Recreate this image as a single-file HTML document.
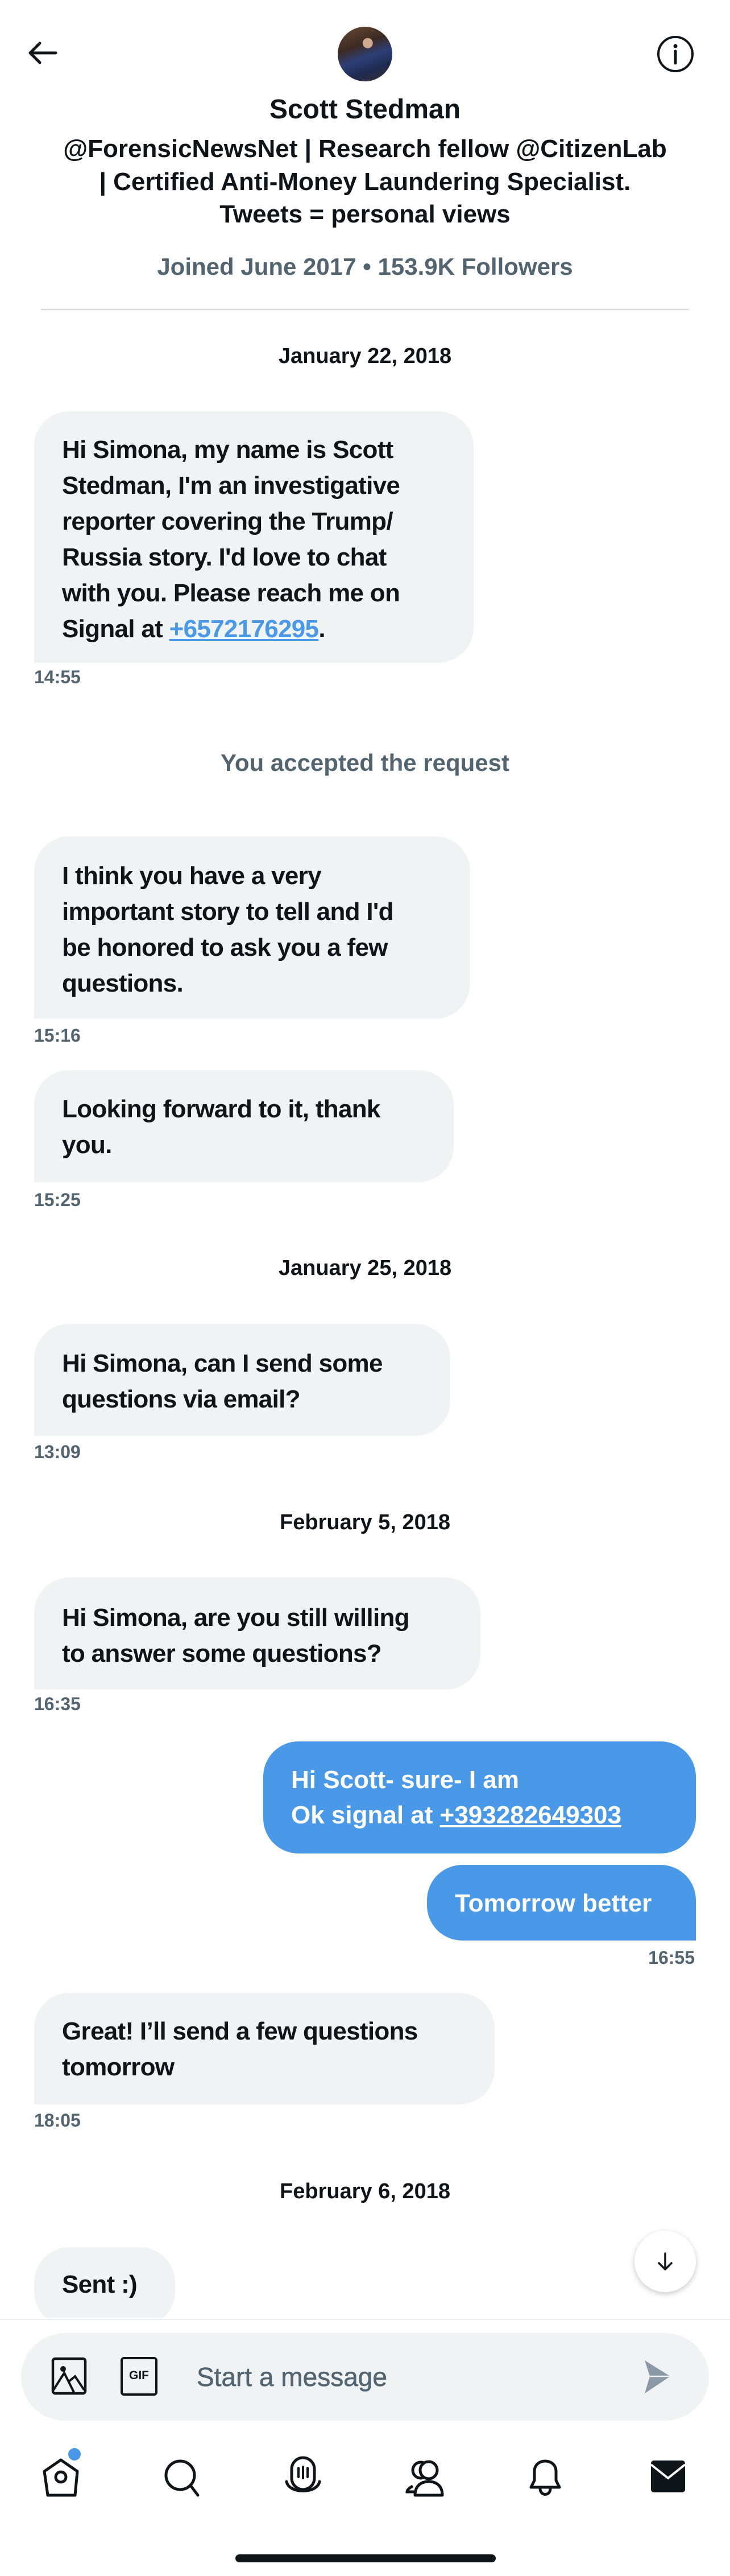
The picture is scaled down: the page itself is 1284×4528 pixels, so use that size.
<!DOCTYPE html>
<html><head><meta charset="utf-8">
<style>
*{margin:0;padding:0;box-sizing:border-box}
html,body{width:1284px;height:4528px;background:#fff;overflow:hidden}
body{position:relative;font-family:"Liberation Sans",sans-serif;color:#0f1419;font-weight:bold}
.a{position:absolute}
.c{position:absolute;left:0;width:1284px;text-align:center;white-space:nowrap}
.b{position:absolute;background:#eff3f4;border-radius:62px 62px 62px 0;padding-left:49px;font-size:44px;line-height:63px;letter-spacing:-0.7px;white-space:nowrap}
.u{position:absolute;background:#4a99e9;color:#fff;border-radius:62px;padding-left:49px;font-size:44px;line-height:62px;white-space:nowrap}
.t{position:absolute;font-size:32px;color:#536471;line-height:34px}
.d{font-size:38px;line-height:44px}
a{color:#4a99e9;text-decoration:underline}
.u a{color:#fff}
</style></head><body>

<svg class="a" style="left:44px;top:66px" width="62" height="56" viewBox="0 0 62 56"><path d="M54 27H10M26 10L9 27L26 44" fill="none" stroke="#0f1419" stroke-width="5" stroke-linecap="round" stroke-linejoin="round"/></svg>

<div class="a" style="left:594px;top:47px;width:96px;height:96px;border-radius:50%;background:radial-gradient(circle at 55% 30%,#d1a890 0 10%,transparent 11%),linear-gradient(160deg,#6a4a35 0%,#3c2a22 35%,#2d3f78 55%,#1e2a50 75%,#3a3030 100%);"></div>

<svg class="a" style="left:1154px;top:61px" width="68" height="68" viewBox="0 0 68 68"><circle cx="34" cy="34" r="30" fill="none" stroke="#0f1419" stroke-width="4"/><circle cx="34" cy="20" r="3.5" fill="#0f1419"/><path d="M34 29V50" stroke="#0f1419" stroke-width="5" stroke-linecap="round"/></svg>

<div class="c" style="top:165px;font-size:48px;line-height:56px">Scott Stedman</div>
<div class="c" style="top:233px;font-size:44px;line-height:57.5px">@ForensicNewsNet | Research fellow @CitizenLab<br>| Certified Anti-Money Laundering Specialist.<br>Tweets = personal views</div>
<div class="c" style="top:443px;font-size:42px;line-height:52px;color:#536471">Joined June 2017 • 153.9K Followers</div>
<div class="a" style="left:72px;top:543px;width:1140px;height:2px;background:#cfd9de"></div>

<div class="c d" style="top:604px">January 22, 2018</div>
<div class="b" style="left:60px;top:723px;width:773px;height:442px;padding-top:36px">Hi Simona, my name is Scott<br>Stedman, I'm an investigative<br>reporter covering the Trump/<br>Russia story. I'd love to chat<br>with you. Please reach me on<br>Signal at <a>+6572176295</a>.</div>
<div class="t" style="left:60px;top:1173px">14:55</div>

<div class="c" style="top:1315px;font-size:42px;line-height:52px;color:#536471">You accepted the request</div>

<div class="b" style="left:60px;top:1470px;width:767px;height:321px;padding-top:38px">I think you have a very<br>important story to tell and I'd<br>be honored to ask you a few<br>questions.</div>
<div class="t" style="left:60px;top:1803px">15:16</div>

<div class="b" style="left:60px;top:1881px;width:738px;height:197px;padding-top:37px">Looking forward to it, thank<br>you.</div>
<div class="t" style="left:60px;top:2092px">15:25</div>

<div class="c d" style="top:2207px">January 25, 2018</div>
<div class="b" style="left:60px;top:2327px;width:732px;height:197px;padding-top:38px">Hi Simona, can I send some<br>questions via email?</div>
<div class="t" style="left:60px;top:2535px">13:09</div>

<div class="c d" style="top:2654px">February 5, 2018</div>
<div class="b" style="left:60px;top:2773px;width:785px;height:197px;padding-top:39px">Hi Simona, are you still willing<br>to answer some questions?</div>
<div class="t" style="left:60px;top:2978px">16:35</div>

<div class="u" style="left:463px;top:3061px;width:761px;height:197px;padding-top:37px">Hi Scott- sure- I am<br>Ok signal at <a>+393282649303</a></div>
<div class="u" style="left:751px;top:3278px;width:473px;height:133px;padding-top:37px;border-radius:62px 62px 0 62px">Tomorrow better</div>
<div class="t" style="right:62px;top:3424px">16:55</div>

<div class="b" style="left:60px;top:3503px;width:810px;height:196px;padding-top:36px">Great! I’ll send a few questions<br>tomorrow</div>
<div class="t" style="left:60px;top:3710px">18:05</div>

<div class="c d" style="top:3830px">February 6, 2018</div>
<div class="b" style="left:60px;top:3950px;width:248px;height:140px;padding-top:34px;border-radius:62px">Sent :)</div>

<div class="a" style="left:1116px;top:3921px;width:108px;height:108px;border-radius:50%;background:#fff;box-shadow:0 3px 10px rgba(0,0,0,0.22)"></div>
<svg class="a" style="left:1150px;top:3955px" width="40" height="40" viewBox="0 0 40 40"><path d="M20 6V33M9 23L20 34L31 23" fill="none" stroke="#0f1419" stroke-width="3.5" stroke-linecap="round" stroke-linejoin="round"/></svg>

<div class="a" style="left:0;top:4076px;width:1284px;height:452px;background:#fff;border-top:1px solid #cfd9de"></div>
<div class="a" style="left:37px;top:4101px;width:1210px;height:154px;border-radius:77px;background:#eff3f4"></div>
<svg class="a" style="left:90px;top:4143px" width="64" height="68" viewBox="0 0 64 68"><rect x="3" y="3" width="57" height="61" rx="4" fill="none" stroke="#0f1419" stroke-width="4.5"/><circle cx="21" cy="21" r="5" fill="#0f1419"/><path d="M4 58L23 28L40 62M30 44L42 34L58 58" fill="none" stroke="#0f1419" stroke-width="4"/></svg>
<div class="a" style="left:212px;top:4143px;width:65px;height:68px;border:4.5px solid #0f1419;border-radius:6px;font-size:21px;line-height:58px;text-align:center;font-weight:bold">GIF</div>
<div class="a" style="left:346px;top:4150px;font-size:46px;line-height:56px;color:#536471;font-weight:normal;-webkit-text-stroke:0.6px #536471">Start a message</div>
<svg class="a" style="left:1131px;top:4147px" width="50" height="62" viewBox="0 0 50 62"><path d="M3 2L48 30L3 60L12 30Z" fill="#8b98a5"/><path d="M12 30H48" stroke="#eff3f4" stroke-width="2.5"/></svg>

<svg class="a" style="left:72px;top:4318px" width="70" height="72" viewBox="0 0 70 72"><path d="M6 26L35 6L64 26L60 68H12Z" fill="none" stroke="#0f1419" stroke-width="5" stroke-linejoin="round"/><circle cx="35" cy="36" r="9" fill="none" stroke="#0f1419" stroke-width="5"/></svg>
<div class="a" style="left:120px;top:4303px;width:22px;height:22px;border-radius:50%;background:#4a99e9"></div>
<svg class="a" style="left:288px;top:4320px" width="66" height="70" viewBox="0 0 66 70"><circle cx="29" cy="31" r="25" fill="none" stroke="#0f1419" stroke-width="5"/><path d="M48 50L60 66" stroke="#0f1419" stroke-width="5" stroke-linecap="round"/></svg>
<svg class="a" style="left:500px;top:4316px" width="66" height="76" viewBox="0 0 66 76"><rect x="13" y="4" width="40" height="56" rx="20" fill="none" stroke="#0f1419" stroke-width="5"/><path d="M25 22V38M33 20V40M41 22V38" stroke="#0f1419" stroke-width="4" stroke-linecap="round"/><path d="M4 46C8 68 58 68 62 46" fill="none" stroke="#0f1419" stroke-width="5" stroke-linecap="round"/></svg>
<svg class="a" style="left:712px;top:4318px" width="70" height="72" viewBox="0 0 70 72"><circle cx="28" cy="24" r="14" fill="none" stroke="#0f1419" stroke-width="5"/><circle cx="42" cy="24" r="15" fill="#fff" stroke="#0f1419" stroke-width="5"/><path d="M14 52C6 56 4 60 4 62H16" fill="none" stroke="#0f1419" stroke-width="5"/><path d="M18 68C18 52 28 44 42 44C56 44 66 52 66 68Z" fill="#fff" stroke="#0f1419" stroke-width="5" stroke-linejoin="round"/></svg>
<svg class="a" style="left:926px;top:4316px" width="66" height="76" viewBox="0 0 66 76"><path d="M8 56H58L52 44V28C52 4 14 4 14 28V44Z" fill="none" stroke="#0f1419" stroke-width="5" stroke-linejoin="round"/><path d="M24 58C24 72 42 72 42 58" fill="none" stroke="#0f1419" stroke-width="5"/></svg>
<svg class="a" style="left:1144px;top:4324px" width="62" height="58" viewBox="0 0 62 58"><rect x="1" y="1" width="60" height="56" rx="5" fill="#0f1419"/><path d="M1 8L31 32L61 8" fill="none" stroke="#fff" stroke-width="4"/></svg>

<div class="a" style="left:414px;top:4490px;width:458px;height:14px;border-radius:7px;background:#0f1419"></div>
</body></html>
